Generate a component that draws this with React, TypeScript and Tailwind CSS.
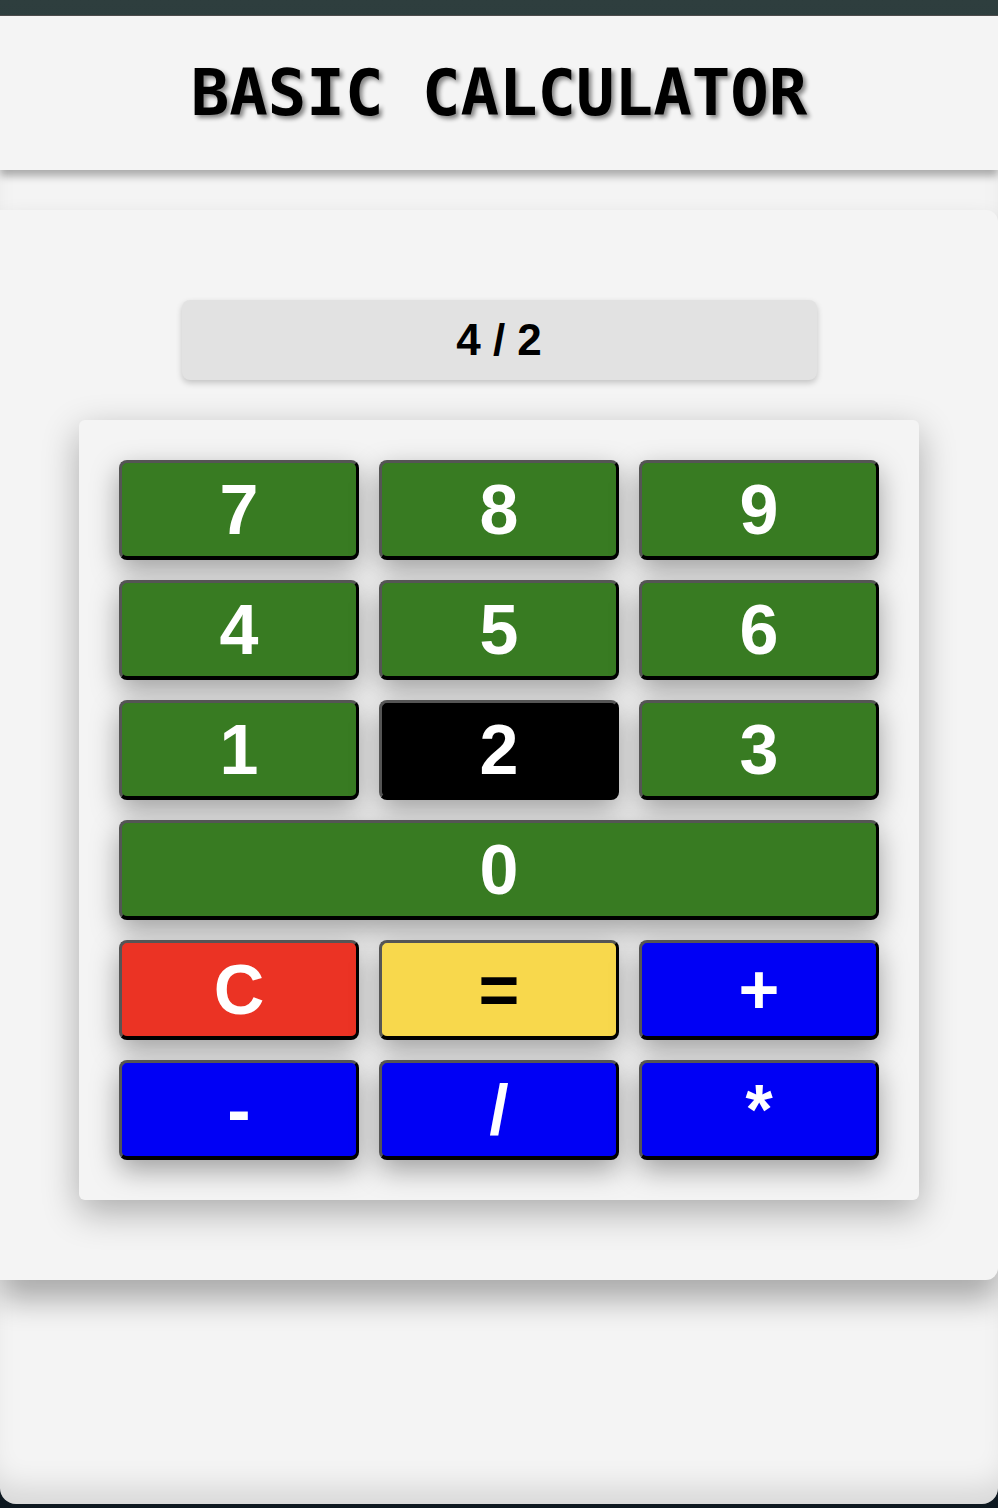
import React from "react";

type Key = { label: string; cls: string; span?: boolean };

const green = "bg-[#387b22] text-white";
const keys: Key[] = [
  { label: "7", cls: green },
  { label: "8", cls: green },
  { label: "9", cls: green },
  { label: "4", cls: green },
  { label: "5", cls: green },
  { label: "6", cls: green },
  { label: "1", cls: green },
  { label: "2", cls: "bg-black text-white" },
  { label: "3", cls: green },
  { label: "0", cls: green, span: true },
  { label: "C", cls: "bg-[#eb3324] text-white" },
  { label: "=", cls: "bg-[#f8d84c] text-black" },
  { label: "+", cls: "bg-[#0000f5] text-white" },
  { label: "-", cls: "bg-[#0000f5] text-white" },
  { label: "/", cls: "bg-[#0000f5] text-white" },
  { label: "*", cls: "bg-[#0000f5] text-white" },
];

export default function App() {
  return (
    <div className="min-h-[1508px] bg-gradient-to-b from-[#2e3e3e] via-[#1c2a2e] to-[#0d1820] pt-[15px] pb-[4px]">
      <div className="h-[1489px] bg-[#f4f4f4] rounded-b-2xl overflow-hidden border-t border-[#4c4c4c] shadow-[inset_0_-30px_30px_-14px_rgba(0,0,0,0.12)]">
        <header className="relative z-10 h-[154px] bg-[#f4f4f4] flex items-center justify-center shadow-[0_6px_8px_rgba(0,0,0,0.3)]">
          <h1 className="font-['DejaVu_Sans_Mono',monospace] font-bold text-[64px] leading-none text-black [text-shadow:3px_3px_4px_rgba(0,0,0,0.45)]">
            BASIC CALCULATOR
          </h1>
        </header>
        <main className="mt-[40px] h-[1070px] bg-[#f4f4f4] rounded-r-xl shadow-[0_20px_30px_rgba(0,0,0,0.3)] flex flex-col items-center pt-[90px]">
          <div className="w-[635px] h-[80px] bg-[#e2e2e2] rounded-lg shadow-[0_3px_6px_rgba(0,0,0,0.2)] flex items-center justify-center font-['Liberation_Sans',Arial,sans-serif] font-bold text-[44px] leading-none text-black">
            4 / 2
          </div>
          <div className="mt-[40px] w-[840px] bg-[#f4f4f4] rounded-md p-[40px] grid grid-cols-3 gap-[20px] shadow-[0_12px_36px_rgba(0,0,0,0.3)]">
            {keys.map((k) => (
              <button
                key={k.label}
                className={`${k.cls} ${k.span ? "col-span-3" : ""} h-[100px] rounded-lg border-[3px] border-b-4 border-t-[#555] border-l-[#555] border-r-black border-b-black flex items-center justify-center font-['Liberation_Sans',Arial,sans-serif] font-bold text-[70px] leading-none shadow-[0_10px_28px_rgba(0,0,0,0.35)]`}
              >
                {k.label}
              </button>
            ))}
          </div>
        </main>
      </div>
    </div>
  );
}
